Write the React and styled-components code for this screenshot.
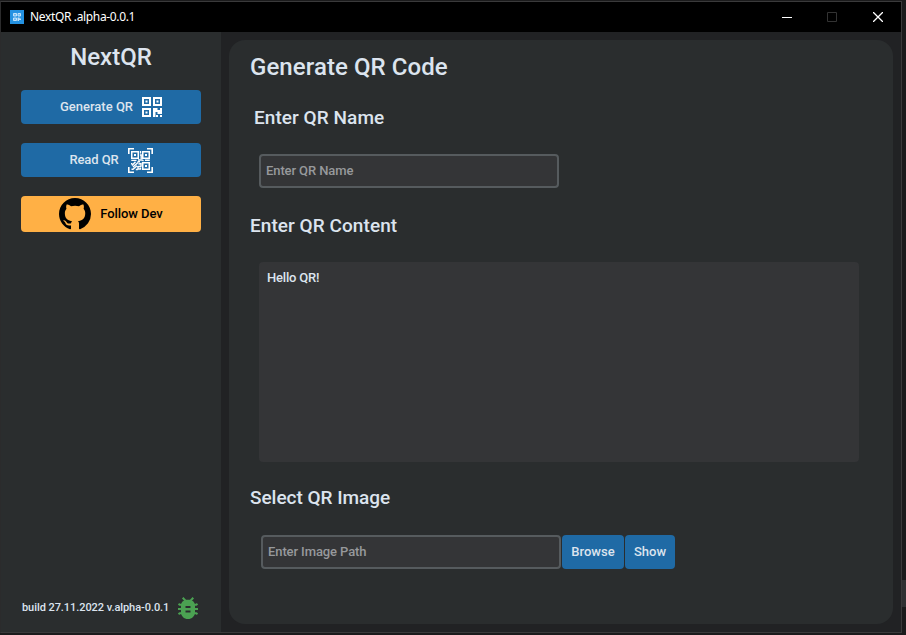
import React from "react";
import styled, { createGlobalStyle } from "styled-components";

const Global = createGlobalStyle`
  *, *::before, *::after { box-sizing: border-box; }
  body { margin: 0; background: #1b1b1c; overflow: hidden; }
  button, input, textarea { font: inherit; margin: 0; }
`;

const Desktop = styled.div`
  width: 906px;
  height: 635px;
  padding: 1px 0 0 0;
  background: linear-gradient(#303133, #303133) 902px 580px / 4px 27px no-repeat #1b1b1c;
  font-family: Roboto, "Liberation Sans", sans-serif;
  font-weight: 500;
  color: #dce4ee;
`;

const Window = styled.div`
  width: 902px;
  height: 632px;
  border: 1px solid #3a3a3b;
  border-left-color: #2b2b2c;
  display: flex;
  flex-direction: column;
  background: #212224;
`;

const TitleBar = styled.header`
  height: 30px;
  flex: none;
  display: flex;
  align-items: center;
  background: #000;
  padding-left: 9px;
`;

const WindowTitle = styled.span`
  flex: 1;
  margin: 0 0 0 6px;
  font: 400 12px/16px "Noto Sans", "Open Sans", sans-serif;
  letter-spacing: -0.35px;
  color: #fff;
`;

const WindowControl = styled.span`
  width: ${(p) => p.$width || 46}px;
  height: 30px;
  display: grid;
  place-items: center;
`;

const Body = styled.div`
  flex: 1;
  display: flex;
`;

const Sidebar = styled.aside`
  width: 220px;
  padding: 10px 20px 13px;
  display: flex;
  flex-direction: column;
  background: #2a2d2e;
`;

const Brand = styled.h1`
  margin: 0 0 18px;
  font-size: 24px;
  line-height: 30px;
  font-weight: 500;
  text-align: center;
`;

const Button = styled.button`
  width: ${(p) => p.$width}px;
  height: ${(p) => p.$height || 34}px;
  padding: 0;
  border: 0;
  border-radius: 4px;
  display: flex;
  align-items: center;
  justify-content: center;
  gap: 9px;
  font-size: 13px;
  line-height: 16px;
  letter-spacing: ${(p) => p.$tracking || 0}px;
  color: ${(p) => (p.$accent ? "#000" : "#dce4ee")};
  background: ${(p) => (p.$accent ? "#ffb045" : "#1f6aa5")};
`;

const Nav = styled.nav`
  display: flex;
  flex-direction: column;
  gap: 19px;
`;

const Build = styled.footer`
  margin-top: auto;
  padding-left: 1px;
  display: flex;
  align-items: center;
  gap: 9px;
  font-size: 11px;
  line-height: 14px;
  letter-spacing: -0.06px;
`;

const Panel = styled.main`
  width: 664px;
  height: 584px;
  margin: 8px 0 0 8px;
  padding: 12px 21px;
  border-radius: 16px;
  background: #2a2d2e;
`;

const Heading = styled.h2`
  margin: 0;
  font-size: 24px;
  line-height: 30px;
  font-weight: 500;
  letter-spacing: 0.08px;
`;

const Label = styled.label`
  display: block;
  margin: ${(p) => p.$top}px 0 0 ${(p) => p.$left || 0}px;
  font-size: 19px;
  line-height: 24px;
  letter-spacing: ${(p) => p.$tracking || 0}px;
`;

const Field = styled.input`
  display: block;
  width: 300px;
  height: 34px;
  padding: 0 5px 2px;
  border: 2px solid #565b5e;
  border-radius: 4px;
  outline: 0;
  background: #343537;
  color: #dce4ee;
  font-size: 13px;
  letter-spacing: -0.1px;
  &::placeholder { color: #97999c; opacity: 1; }
`;

const NameRow = styled.div`
  margin: 24px 0 0 9px;
`;

const Content = styled.textarea`
  display: block;
  width: 600px;
  height: 200px;
  margin: 24px 0 0 9px;
  padding: 8px;
  border: 0;
  border-radius: 4px;
  outline: 0;
  resize: none;
  background: #343537;
  color: #dce4ee;
  font-size: 13px;
  line-height: 16px;
  letter-spacing: -0.2px;
`;

const ImageRow = styled.div`
  display: flex;
  gap: 1px;
  margin: 25px 0 0 11px;
`;

const Icon = styled.svg`
  display: block;
  flex: none;
`;

function Finder({ x, y, s = 9, w = 2, dot = 2 }) {
  const c = s / 2;
  return (
    <g>
      <rect x={x + w / 2} y={y + w / 2} width={s - w} height={s - w} fill="none" stroke="#fff" strokeWidth={w} />
      <rect x={x + c - dot / 2} y={y + c - dot / 2} width={dot} height={dot} fill="#fff" />
    </g>
  );
}

const QrIcon = () => (
  <Icon width="20" height="20" viewBox="0 0 20 20">
    <Finder x={0} y={0} />
    <Finder x={11} y={0} />
    <Finder x={0} y={11} />
    <path fill="#fff" d="M11 11h4.500v2h2.500v-2h2v6h-4.500v-2h-2v5H11zM14 18h2v2h-2zM18 18h2v2h-2z" />
  </Icon>
);

const ScanIcon = () => (
  <Icon width="25" height="25" viewBox="0 0 25 25">
    <path d="M.8 6V.8H6M19 .8h5.2V6M24.2 19v5.200H19M6 24.200H.8V19" fill="none" stroke="#fff" strokeWidth="1.600" />
    <Finder x={3} y={3} s={8} w={1.5} />
    <Finder x={14} y={3} s={8} w={1.5} />
    <Finder x={14} y={14} s={8} w={1.5} />
    <path
      fill="none"
      stroke="#fff"
      strokeWidth="1.400"
      d="M12.500 3v2.500M11.900 7h1.300v4M3.300 12.400h5.200M10 12h4l1.500.8M17 12.200h4.800M4 17.500l3.500-3.800M9.500 13.800h2.500M3.700 15v1.500M5 19l5-4.500M10.500 16l2.500-.5v2.700l-3 .5v2.300h3M3.500 21.300h1.500l4-3.600M7.800 21.500h2M12.500 19.500v2.300"
    />
  </Icon>
);

const AppIcon = () => (
  <Icon width="14" height="14" viewBox="0 0 14 14">
    <path fill="#2492e2" d="M0 0h14v14H0z" />
    <path
      fill="#6db8f0"
      stroke="#c2e2fa"
      d="M3.500 3.500h3v2.500h-3zM8 3.500h2.500v2.500H8zM3.500 8h3v2.500h-3z"
    />
    <path fill="#c2e2fa" d="M7.500 7.500h2v1H11v1.500H9v1H7.500z" />
  </Icon>
);

const GithubIcon = () => (
  <Icon width="32" height="32" viewBox="0 0 16 16">
    <path d="M8 0C3.58 0 0 3.58 0 8c0 3.54 2.29 6.53 5.47 7.59.4.07.55-.17.55-.38 0-.19-.01-.82-.01-1.49-2.01.37-2.53-.49-2.69-.94-.09-.23-.48-.94-.82-1.13-.28-.15-.68-.52-.01-.53.63-.01 1.08.58 1.23.82.72 1.21 1.87.87 2.33.66.07-.52.28-.87.51-1.07-1.78-.2-3.64-.89-3.64-3.95 0-.87.31-1.59.82-2.15-.08-.2-.36-1.02.08-2.12 0 0 .67-.21 2.2.82.64-.18 1.32-.27 2-.27s1.36.09 2 .27c1.53-1.04 2.2-.82 2.2-.82.44 1.1.16 1.92.08 2.12.51.56.82 1.27.82 2.15 0 3.07-1.87 3.75-3.65 3.95.29.25.54.73.54 1.48 0 1.07-.01 1.93-.01 2.2 0 .21.15.46.55.38A8.013 8.013 0 0016 8c0-4.42-3.58-8-8-8z" />
  </Icon>
);

const BugIcon = () => (
  <Icon width="20" height="22" viewBox="0 0 20 22">
    <path
      d="M4.700.8L8 4.200M15.300.8L12 4.200M4 7.800H1.800L.5 6.800M16 7.800h2.200l1.300-1M4 12H0M16 12h4M4 16.200H1.800L.5 17.200M16 16.200h2.200l1.300 1"
      fill="none"
      stroke="#4ba152"
      strokeWidth="2"
    />
    <path
      fillRule="evenodd"
      fill="#4ba152"
      d="M10 2.800c4.500 0 7 2.200 7 6.200v6c0 4.300-3 7-7 7s-7-2.700-7-7V9c0-4 2.500-6.200 7-6.200zM7.500 9v2h5V9zM7.500 13.500v2h5v-2z"
    />
  </Icon>
);

export default function App() {
  return (
    <Desktop>
      <Global />
      <Window>
        <TitleBar>
          <AppIcon />
          <WindowTitle>NextQR .alpha-0.0.1</WindowTitle>
          <WindowControl $width={45}>
            <Icon width="10" height="10"><path d="M0 5.500h10" stroke="#fff" /></Icon>
          </WindowControl>
          <WindowControl>
            <Icon width="10" height="10"><path d="M.5.5h9v9h-9z" fill="none" stroke="#333" /></Icon>
          </WindowControl>
          <WindowControl>
            <Icon width="10" height="10"><path d="M0 0l10 10M10 0L0 10" stroke="#fff" strokeWidth="1.300" /></Icon>
          </WindowControl>
        </TitleBar>
        <Body>
          <Sidebar>
            <Brand>NextQR</Brand>
            <Nav>
              <Button $width={180}>Generate QR<QrIcon /></Button>
              <Button $width={180} $tracking={-0.1}>Read QR<ScanIcon /></Button>
              <Button $width={180} $height={36} $tracking={-0.08} $accent><GithubIcon />Follow Dev</Button>
            </Nav>
            <Build>build 27.11.2022 v.alpha-0.0.1<BugIcon /></Build>
          </Sidebar>
          <Panel>
            <Heading>Generate QR Code</Heading>
            <Label $top={24} $left={4} $tracking={0.06}>Enter QR Name</Label>
            <NameRow><Field placeholder="Enter QR Name" /></NameRow>
            <Label $top={26} $tracking={0.06}>Enter QR Content</Label>
            <Content defaultValue="Hello QR!" spellCheck={false} />
            <Label $top={24} $tracking={-0.03}>Select QR Image</Label>
            <ImageRow>
              <Field placeholder="Enter Image Path" />
              <Button $width={62}>Browse</Button>
              <Button $width={50}>Show</Button>
            </ImageRow>
          </Panel>
        </Body>
      </Window>
    </Desktop>
  );
}
